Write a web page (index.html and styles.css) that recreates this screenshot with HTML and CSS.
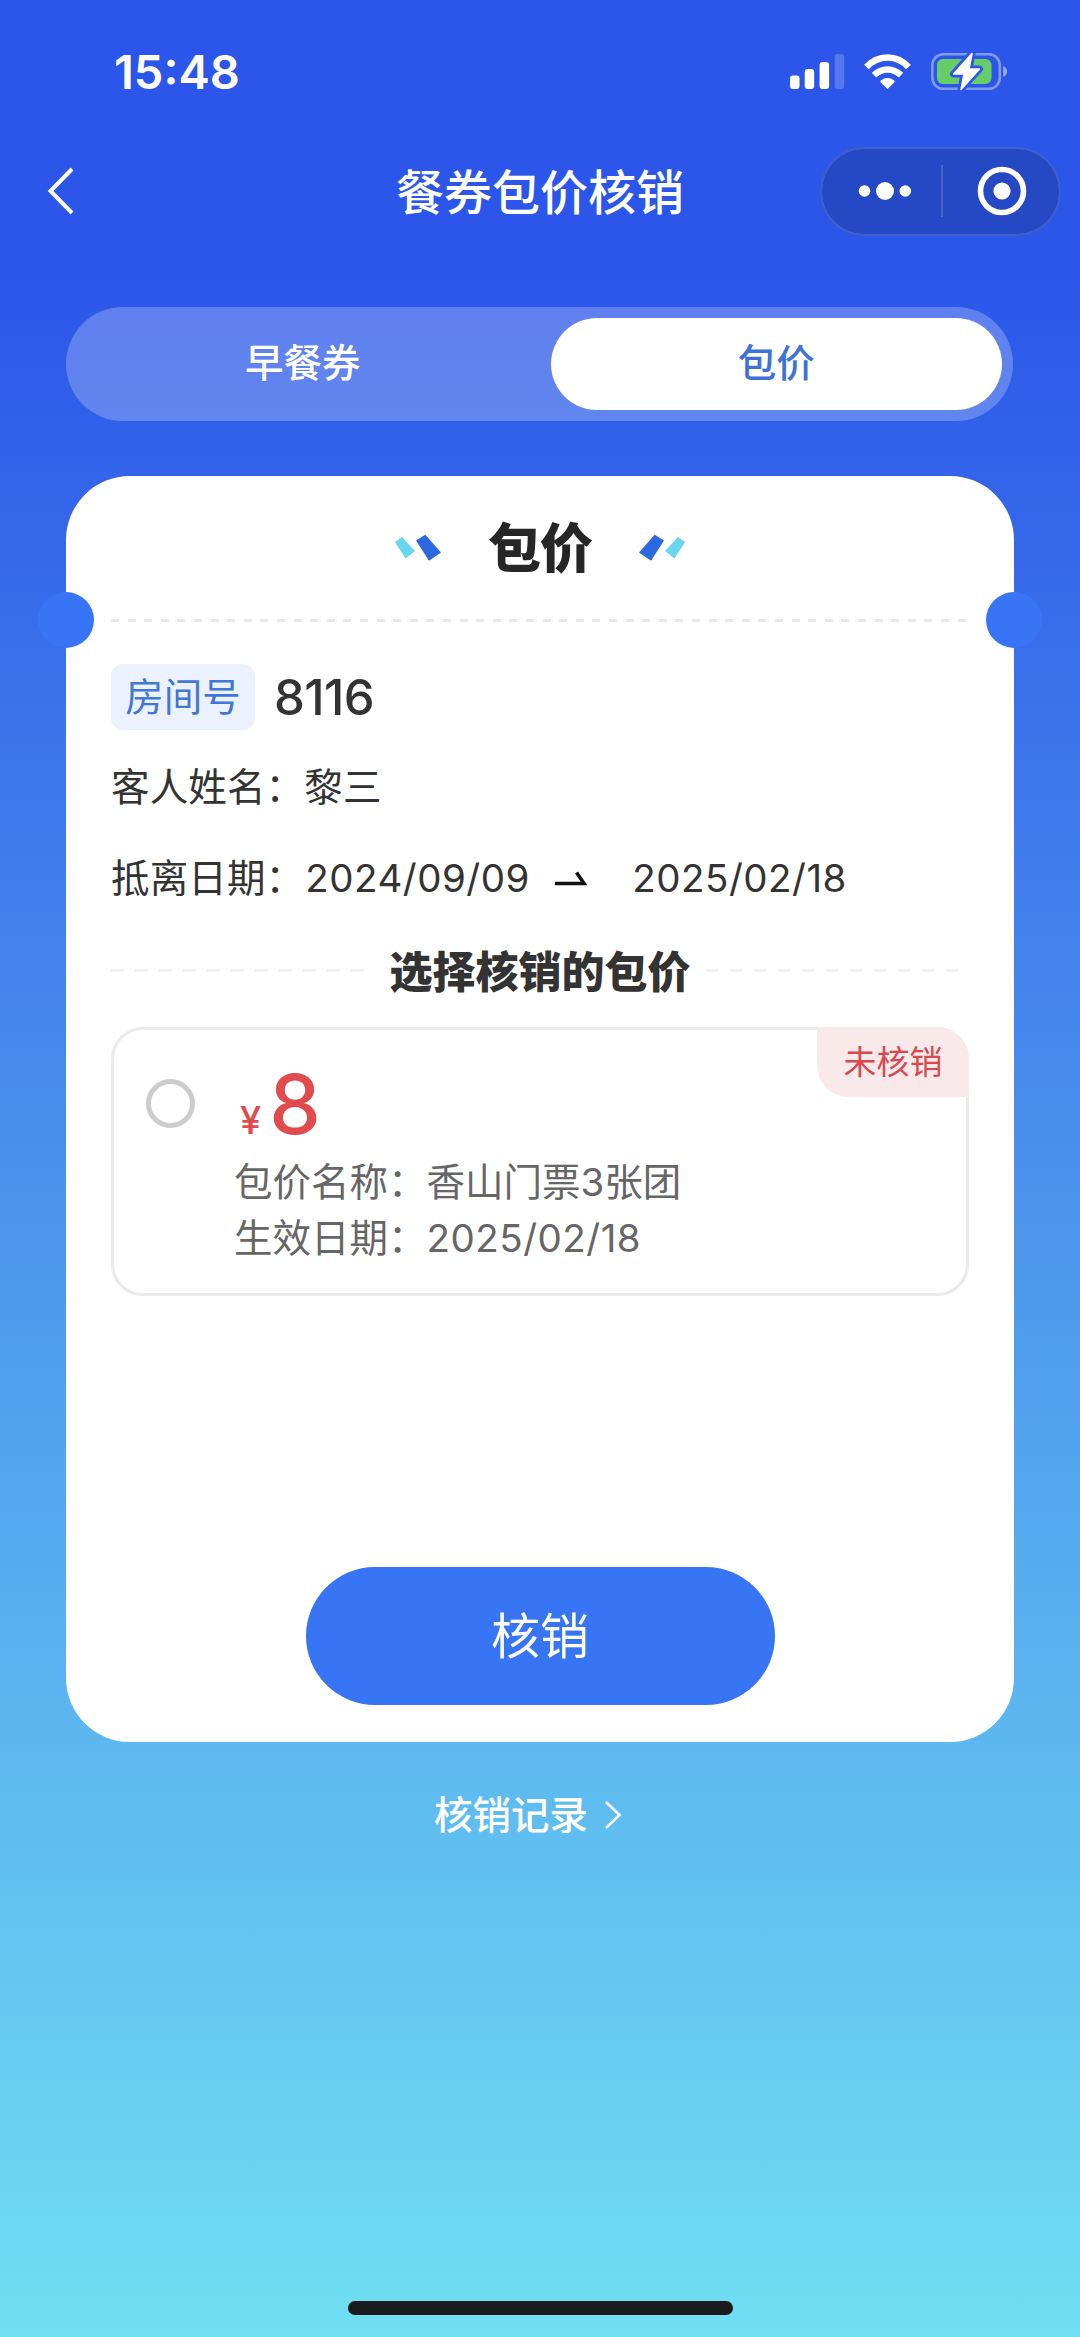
FILE: index.html
```html
<!DOCTYPE html>
<html lang="zh-CN">
<head>
<meta charset="utf-8">
<title>餐券包价核销</title>
<link rel="stylesheet" href="styles.css">
</head>
<body>
<div class="screen">
  <header class="status">
    <span class="time">15:48</span>
    <svg class="status-icons" width="220" height="40" viewBox="788 52 220 40">
      <g fill="#fff">
        <rect x="790" y="75.5" width="9.5" height="13.5" rx="3"/>
        <rect x="804.7" y="69" width="9.5" height="20" rx="3"/>
        <rect x="819.6" y="62" width="9.5" height="27" rx="3"/>
        <rect x="834.7" y="54" width="9.5" height="35" rx="3" opacity=".2"/>
        <path d="M887.5 89 L880.5 82.2 Q880 81 881 80.3 Q887.5 75.5 894 80.3 Q895 81 894.5 82.2 Z"/>
      </g>
      <g fill="none" stroke="#fff" stroke-width="6.5">
        <path d="M866.5 67 Q875 57.4 887.5 57.4 Q900 57.4 908.5 67"/>
        <path d="M874 75.2 Q880 69.5 887.5 69.5 Q895 69.5 901 75.2"/>
      </g>
      <rect x="932.3" y="54.3" width="67.5" height="34.5" rx="11" fill="none" stroke="#fff" stroke-width="2.6" opacity=".4"/>
      <path d="M1003.2 66 Q1007 68 1007 71.5 Q1007 75 1003.2 77 Z" fill="#fff" opacity=".5"/>
      <rect x="937" y="59" width="54.5" height="25" rx="6" fill="#67ce67"/>
      <path d="M972 53.5 L953.5 74 H964 L961 89.5 L979.5 69 H969 Z" fill="#fff" stroke="#2c56e9" stroke-width="7" stroke-linejoin="round"/>
      <path d="M972 53.5 L953.5 74 H964 L961 89.5 L979.5 69 H969 Z" fill="#fff" stroke="#fff" stroke-width="1.5" stroke-linejoin="round"/>
    </svg>
  </header>

  <nav class="navbar">
    <svg class="back" width="30" height="52" viewBox="46 165 30 52" fill="none" stroke="#fff" stroke-width="4"><path d="M72 169 L50.5 191 L72 213"/></svg>
    <h1 class="nav-title">餐券包价核销</h1>
    <div class="capsule">
      <svg width="54" height="20" viewBox="0 0 54 20" fill="#fff"><circle cx="6.5" cy="10" r="5.8"/><circle cx="27" cy="10" r="9"/><circle cx="47.3" cy="10" r="5.8"/></svg>
      <span class="capsule-line"></span>
      <svg width="50" height="50" viewBox="0 0 50 50"><circle cx="25" cy="25" r="21.5" fill="none" stroke="#fff" stroke-width="5.6"/><circle cx="25" cy="25" r="8.6" fill="#fff"/></svg>
    </div>
  </nav>

  <div class="tabs">
    <span class="tab">早餐券</span>
    <span class="tab tab-active">包价</span>
  </div>

  <main class="ticket">
    <div class="ticket-head">
      <svg width="48" height="28" viewBox="395 535 48 28"><path d="M396 543 L403 538 L416 552 L406.5 559.5Z" fill="#69d5ef"/><path d="M417 541.5 L426.3 535.7 L442 553.5 L430 561.7Z" fill="#2c68df"/></svg>
      <h2 class="ticket-title">包价</h2>
      <svg class="mirror" width="48" height="28" viewBox="395 535 48 28"><path d="M396 543 L403 538 L416 552 L406.5 559.5Z" fill="#69d5ef"/><path d="M417 541.5 L426.3 535.7 L442 553.5 L430 561.7Z" fill="#2c68df"/></svg>
    </div>
    <div class="tear">
      <i class="notch notch-left"></i>
      <span class="dash"></span>
      <i class="notch notch-right"></i>
    </div>
    <div class="room"><span class="room-tag">房间号</span><span class="room-no">8116</span></div>
    <div class="row"><span class="cjk">客人姓名：</span><span class="cjk">黎三</span></div>
    <div class="row">
      <span class="cjk">抵离日期：</span><span class="date date-in">2024/09/09</span>
      <svg class="arrow" width="34" height="16" viewBox="553 870 34 16"><path d="M554 883.5 H583 L575.5 872.5" fill="none" stroke="#111" stroke-width="3.6"/></svg>
      <span class="date">2025/02/18</span>
    </div>
    <div class="section">
      <span class="dash dash-soft"></span>
      <h3 class="section-title">选择核销的包价</h3>
      <span class="dash dash-soft"></span>
    </div>
    <article class="item">
      <i class="radio"></i>
      <div class="item-body">
        <div class="price"><span class="yen">¥</span><span class="amount">8</span></div>
        <div class="item-line">包价名称：香山门票3张团</div>
        <div class="item-line">生效日期：<span class="date">2025/02/18</span></div>
      </div>
      <span class="state">未核销</span>
    </article>
    <button class="submit" type="button">核销</button>
  </main>

  <div class="records">
    <span class="records-text">核销记录</span>
    <svg width="18" height="30" viewBox="0 0 18 30" fill="none" stroke="#fff" stroke-width="2.6"><path d="M2 2 L15.5 15 L2 28"/></svg>
  </div>
  <div class="home-bar"></div>
</div>
</body>
</html>
```
FILE: styles.css
```css
* { box-sizing: border-box; }
body { margin: 0; }
h1, h2, h3 { margin: 0; }

.screen {
  display: flex;
  flex-direction: column;
  width: 1080px;
  height: 2337px;
  background: linear-gradient(180deg, #2c56e9 0, #2c56e9 270px, #70dff2 100%);
  font-family: "Inter", "Noto Sans CJK SC", sans-serif;
  font-size: 38.5px;
  color: #333;
  overflow: hidden;
}

.status {
  display: flex;
  justify-content: space-between;
  align-items: center;
  height: 144px;
  padding: 0 72px 0 114px;
}
.time { padding-bottom: 2px; font-size: 47px; font-weight: 600; color: #fff; }

.navbar {
  display: grid;
  grid-template-columns: 241px 1fr 241px;
  align-items: center;
  height: 94px;
  padding: 0 19px 0 19px;
}
.back { margin-left: 27px; }
.nav-title { padding-top: 4px; font-size: 48px; font-weight: 500; line-height: 86px; text-align: center; color: #fff; }
.capsule {
  display: flex;
  align-items: center;
  height: 89px;
  padding-left: 36px;
  border: 2px solid rgba(255, 255, 255, .13);
  border-radius: 45px;
  background: #2548c4;
}
.capsule-line { width: 2px; height: 52px; margin: 0 34px 0 29px; background: rgba(255, 255, 255, .17); }

.tabs {
  display: flex;
  height: 114px;
  margin: 69px 67px 0 66px;
  padding: 11px;
  border-radius: 57px;
  background: rgba(255, 255, 255, .24);
  color: #fff;
  font-weight: 500;
}
.tab { width: 474px; padding-right: 22px; line-height: 90px; text-align: center; border-radius: 46px; }
.tab-active { width: 452px; padding: 0; background: #fff; color: #3f72d9; }

.ticket {
  display: flex;
  flex-direction: column;
  height: 1266px;
  margin: 55px 66px 0;
  padding: 0 45px 37px;
  border-radius: 64px;
  background: #fff;
}
.ticket-head { display: flex; justify-content: center; align-items: center; gap: 46px; height: 116px; padding-top: 27px; }
.ticket-title { padding-top: 3px; font-size: 53px; font-weight: 900; line-height: 90px; color: #262626; letter-spacing: -1px; }
.mirror { transform: scaleX(-1); }

.tear { position: relative; display: flex; align-items: center; height: 56px; }
.notch { position: absolute; top: 0; width: 56px; height: 56px; border-radius: 50%; background: #3875f6; }
.notch-left { left: -73px; }
.notch-right { right: -73px; }
.dash { flex: 1; height: 3px; background: repeating-linear-gradient(90deg, #e9e9e9 0 8px, transparent 8px 16.6px); }
.dash-soft { background: repeating-linear-gradient(90deg, #f2f2f2 0 13px, transparent 13px 24px); }

.room { display: flex; align-items: center; height: 66px; margin-top: 16px; }
.room-tag { width: 144px; line-height: 66px; height: 66px; text-align: center; border-radius: 12px; background: #ecf2fd; color: #4377d6; }
.room-no { margin-left: 19px; font-size: 49px; font-weight: 500; letter-spacing: -.6px; }

.row { display: flex; align-items: center; height: 91px; }
.cjk { padding-bottom: 6px; letter-spacing: .15px; }
.room + .row { margin-top: 11px; }
.date { font-weight: 400; letter-spacing: .5px; }
.date-in { width: 222px; margin-left: 1px; white-space: nowrap; }
.arrow { margin: 0 44px 0 27px; }

.section { display: flex; align-items: center; gap: 15px; height: 66px; margin-top: 14px; }
.section-title { padding-top: 3px; font-size: 43px; font-weight: 900; line-height: 60px; color: #333; }

.item {
  position: relative;
  display: flex;
  height: 269px;
  margin-top: 24px;
  padding: 38px 0 0 32px;
  border: 3px solid #ebebeb;
  border-radius: 32px;
}
.radio { width: 49px; height: 49px; margin-top: 11px; border: 5px solid #ccc; border-radius: 50%; }
.item-body { margin-left: 39px; color: #666; }
.price { display: flex; align-items: baseline; height: 86px; line-height: 74px; padding-left: 6px; color: #e14b4e; font-weight: 500; }
.yen { padding-bottom: 2px; font-size: 38px; }
.amount { margin-left: 8px; font-size: 82px; font-weight: 500; }
.item-line { line-height: 56px; }
.state {
  position: absolute;
  top: -3px;
  right: -3px;
  width: 152px;
  height: 70px;
  line-height: 71px;
  text-align: center;
  font-size: 33px;
  border-radius: 0 32px 0 32px;
  background: #f9e9eb;
  color: #d9484e;
}

.submit {
  align-self: center;
  width: 469px;
  height: 138px;
  margin-top: auto;
  padding: 0 0 6px;
  border: 0;
  border-radius: 69px;
  background: #3875f4;
  color: #fff;
  font: 400 49px/132px "Noto Sans CJK SC", sans-serif;
}

.records { display: flex; justify-content: center; align-items: center; gap: 16px; height: 60px; margin: 43px 24px 0 0; color: #fff; font-weight: 500; }
.records-text { padding-bottom: 6px; }
.home-bar { width: 385px; height: 14px; margin: auto auto 22px 348px; border-radius: 7px; background: #191c1c; }
```
